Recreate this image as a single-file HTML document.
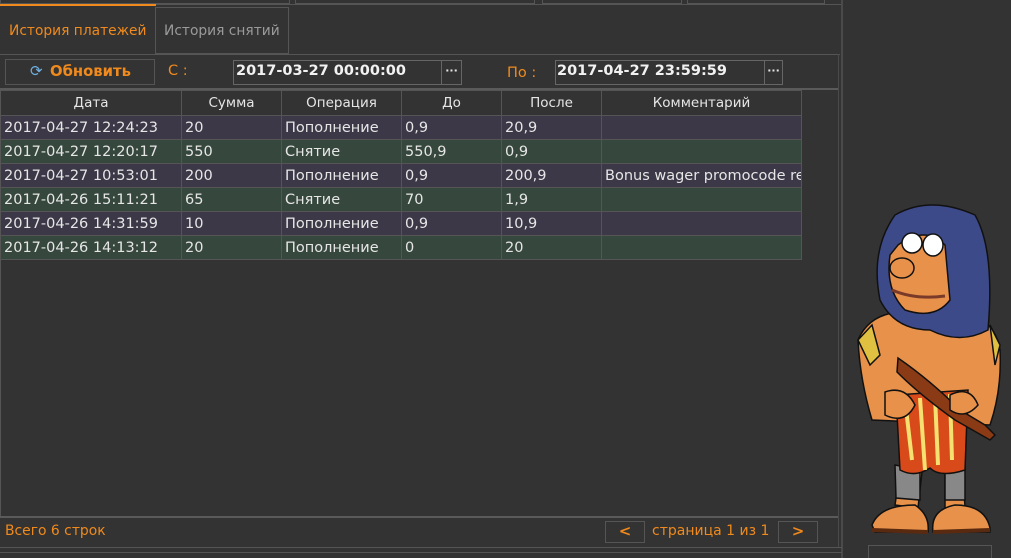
<!DOCTYPE html>
<html><head><meta charset="utf-8"><style>
*{margin:0;padding:0;box-sizing:border-box}
html,body{width:1011px;height:558px;overflow:hidden}
body{background:#333;font-family:"DejaVu Sans","Liberation Sans",sans-serif;position:relative;color:#e6e6e6}
.a{position:absolute}
.ln{position:absolute;background:#555}
.tab{position:absolute;font-size:13.8px;line-height:16px}
table{border-collapse:collapse;position:absolute;left:0;top:90px;font-family:"DejaVu Sans","Liberation Sans",sans-serif;font-size:14.5px;table-layout:fixed}
td,th{border:1px solid #555;height:24px;padding:0 3px;white-space:nowrap;overflow:hidden;text-align:left;font-weight:normal}
th{text-align:center;background:#333;height:25px;font-size:13.5px}
tr.p td{background:#3c3847}
tr.g td{background:#36473d}
.box{position:absolute;border:1px solid #666}
.mono{font-family:"DejaVu Sans","Liberation Sans",sans-serif;font-weight:bold;font-size:14.5px;color:#f2f2f2}
.or{color:#f08a1c}
</style></head><body>
<div class="box" style="left:0;top:-2px;width:290px;height:6px;border-color:#555"></div>
<div class="box" style="left:295px;top:-2px;width:240px;height:6px;border-color:#555"></div>
<div class="box" style="left:542px;top:-2px;width:140px;height:6px;border-color:#555"></div>
<div class="box" style="left:687px;top:-2px;width:138px;height:6px;border-color:#555"></div>
<div class="ln" style="left:0;top:4px;width:842px;height:1px"></div>
<div class="a" style="left:0;top:4px;width:156px;height:2px;background:#f08a1c"></div>
<div class="ln" style="left:841px;top:0;width:2px;height:558px;background:#4a4a4a"></div>
<div class="tab or" style="left:9px;top:23px">История платежей</div>
<div class="box" style="left:155px;top:7px;width:134px;height:47px;border-color:#555"></div>
<div class="tab" style="left:164px;top:23px;color:#9a9a9a">История снятий</div>
<div class="ln" style="left:0;top:54px;width:840px;height:1px"></div>
<div class="ln" style="left:838px;top:54px;width:1px;height:494px;background:#4a4a4a"></div>
<div class="box" style="left:5px;top:59px;width:150px;height:26px;border-color:#555"></div>
<div class="a" style="left:30px;top:62px;font-size:15px;color:#6fb0e0">⟳</div>
<div class="a" style="left:50px;top:63px;font-size:14.8px;font-weight:bold;color:#f08a1c">Обновить</div>
<div class="a or" style="left:168px;top:63px;font-size:14.5px">С :</div>
<div class="box" style="left:233px;top:60px;width:209px;height:25px"></div>
<div class="box" style="left:441px;top:60px;width:21px;height:25px;text-align:center;font-size:11px;font-weight:bold;line-height:20px">···</div>
<div class="a mono" style="left:236px;top:63px">2017-03-27 00:00:00</div>
<div class="a or" style="left:507px;top:65px;font-size:14.5px">По :</div>
<div class="box" style="left:555px;top:60px;width:210px;height:25px"></div>
<div class="box" style="left:764px;top:60px;width:19px;height:25px;text-align:center;font-size:11px;font-weight:bold;line-height:20px">···</div>
<div class="a mono" style="left:557px;top:63px">2017-04-27 23:59:59</div>
<div class="ln" style="left:0;top:88px;width:838px;height:2px;background:#5a5a5a"></div>
<table style="width:801px">
<colgroup><col style="width:181px"><col style="width:100px"><col style="width:120px"><col style="width:100px"><col style="width:100px"><col style="width:200px"></colgroup>
<tr><th>Дата</th><th>Сумма</th><th>Операция</th><th>До</th><th>После</th><th>Комментарий</th></tr>
<tr class="p"><td>2017-04-27 12:24:23</td><td>20</td><td>Пополнение</td><td>0,9</td><td>20,9</td><td></td></tr>
<tr class="g"><td>2017-04-27 12:20:17</td><td>550</td><td>Снятие</td><td>550,9</td><td>0,9</td><td></td></tr>
<tr class="p"><td>2017-04-27 10:53:01</td><td>200</td><td>Пополнение</td><td>0,9</td><td>200,9</td><td style="text-overflow:clip">Bonus wager promocode re</td></tr>
<tr class="g"><td>2017-04-26 15:11:21</td><td>65</td><td>Снятие</td><td>70</td><td>1,9</td><td></td></tr>
<tr class="p"><td>2017-04-26 14:31:59</td><td>10</td><td>Пополнение</td><td>0,9</td><td>10,9</td><td></td></tr>
<tr class="g"><td>2017-04-26 14:13:12</td><td>20</td><td>Пополнение</td><td>0</td><td>20</td><td></td></tr>
</table>
<div class="ln" style="left:0;top:90px;width:1px;height:426px"></div>
<div class="ln" style="left:0;top:516px;width:838px;height:2px;background:#5a5a5a"></div>
<div class="a or" style="left:5px;top:523px;font-size:13.9px">Всего 6 строк</div>
<div class="box" style="left:605px;top:521px;width:40px;height:22px;border-color:#555;color:#f08a1c;text-align:center;font-weight:bold;font-size:15px;line-height:19px">&lt;</div>
<div class="a or" style="left:652px;top:523px;font-size:14px">страница 1 из 1</div>
<div class="box" style="left:778px;top:521px;width:40px;height:22px;border-color:#555;color:#f08a1c;text-align:center;font-weight:bold;font-size:15px;line-height:19px">&gt;</div>
<div class="ln" style="left:0;top:547px;width:842px;height:1px"></div>
<div class="ln" style="left:0;top:552px;width:842px;height:1px"></div>
<div class="box" style="left:868px;top:545px;width:124px;height:20px;border-color:#555"></div>
<svg class="a" style="left:840px;top:200px" width="171" height="345" viewBox="840 200 171 345">
<g stroke="#111" stroke-width="1.5">
<path d="M872 420 Q860 380 858 340 Q870 312 905 312 L960 312 Q995 318 1000 350 Q1002 390 990 425 Z" fill="#e8914a"/>
<path d="M900 470 L895 505 L918 508 L922 472 Z M945 472 L945 508 L965 506 L962 470 Z" fill="#e8914a"/>
<path d="M895 465 L920 470 L920 500 L896 498 Z M945 468 L965 465 L965 500 L945 500 Z" fill="#888"/>
<path d="M872 525 Q880 505 915 505 Q930 515 928 532 L875 532 Z M933 532 Q930 510 955 505 Q985 505 990 528 L990 532 Z" fill="#e8914a"/>
<path d="M872 530 L928 532 M933 532 L990 530" stroke="#5a2a10" stroke-width="4"/>
<path d="M896 395 L968 390 L965 470 Q940 478 930 468 Q915 478 900 470 Z" fill="#d84a1a"/>
<path d="M905 400 L912 460 M920 398 L925 470 M935 396 L938 465 M950 394 L952 460" stroke="#f5e070" stroke-width="4"/>
<path d="M898 358 Q930 380 960 410 L985 425 L995 435 L990 440 L955 420 Q920 395 897 372 Z" fill="#8a3a14"/>
<path d="M885 392 Q905 385 915 405 Q905 425 885 415 Z M950 395 Q970 385 978 405 Q965 420 950 410 Z" fill="#e8914a"/>
<path d="M895 215 Q930 195 975 215 Q995 250 988 330 Q960 345 930 330 Q895 330 880 300 Q870 250 895 215 Z" fill="#3d4a8a"/>
<path d="M898 245 Q925 225 945 245 L950 300 Q935 320 905 310 Q885 290 890 255 Z" fill="#e8914a"/>
<ellipse cx="912" cy="243" rx="10" ry="10" fill="#fff"/>
<ellipse cx="933" cy="245" rx="10" ry="11" fill="#fff"/>
<ellipse cx="902" cy="268" rx="12" ry="10" fill="#e8914a"/>
<path d="M892 290 Q915 300 945 296" fill="none" stroke="#7a3a2a" stroke-width="3"/>
<path d="M858 340 L872 325 L880 355 L870 365 Z M990 325 L1000 345 L995 365 Z" fill="#e0c040"/>
</g>
</svg>
</body></html>
